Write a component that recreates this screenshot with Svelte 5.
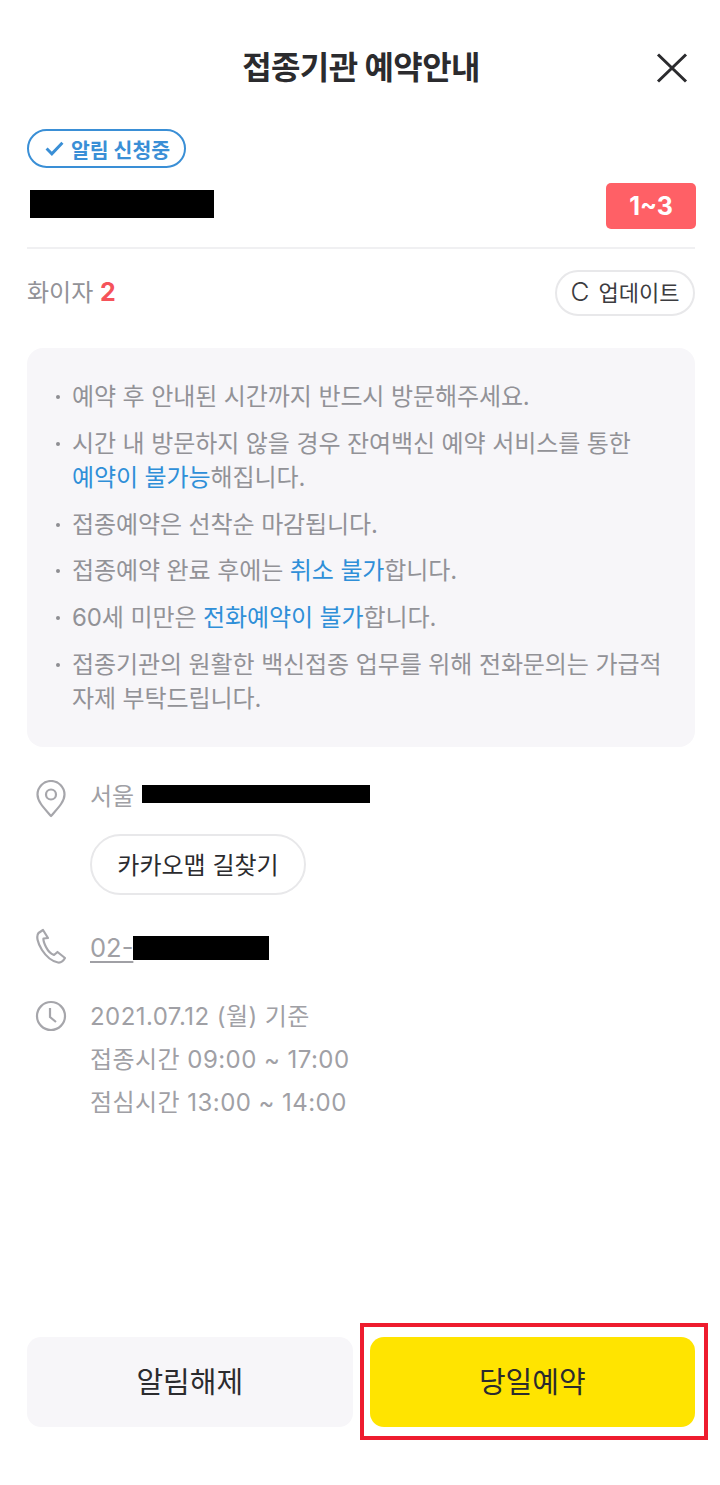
<script>
  const notes = [
    [{ t: '예약 후 안내된 시간까지 반드시 방문해주세요.' }],
    [{ t: '시간 내 방문하지 않을 경우 잔여백신 예약 서비스를 통한 ' }, { t: '예약이 불가능', b: true }, { t: '해집니다.' }],
    [{ t: '접종예약은 선착순 마감됩니다.' }],
    [{ t: '접종예약 완료 후에는 ' }, { t: '취소 불가', b: true }, { t: '합니다.' }],
    [{ t: '60세 미만은 ' }, { t: '전화예약이 불가', b: true }, { t: '합니다.' }],
    [{ t: '접종기관의 원활한 백신접종 업무를 위해 전화문의는 가급적 자제 부탁드립니다.' }]
  ];
</script>

<div class="page">
  <header class="head">
    <h1>접종기관 예약안내</h1>
    <svg class="close" viewBox="0 0 32 30" width="32" height="30" aria-label="닫기">
      <path d="M2 1.5 30 28.5M30 1.5 2 28.5" fill="none" stroke="#2b2b2e" stroke-width="3" />
    </svg>
  </header>

  <section class="top">
    <div class="badge">
      <svg viewBox="0 0 18 14" width="19" height="15"><path d="M1.500 7 6.500 12 16.500 1.500" fill="none" stroke="#3a8fd6" stroke-width="2.800" /></svg>
      <span>알림 신청중</span>
    </div>
    <div class="name">
      <div class="redact r1"></div>
      <div class="qty">1~3</div>
    </div>
  </section>

  <div class="status">
    <div class="count">화이자 <b>2</b></div>
    <div class="update"><span class="c">C</span><span>업데이트</span></div>
  </div>

  <ul class="notes">
    {#each notes as n}
      <li>
        {#each n as part}{#if part.b}<em>{part.t}</em>{:else}{part.t}{/if}{/each}
      </li>
    {/each}
  </ul>

  <div class="info first">
    <svg class="ico pin" viewBox="0 0 32 38" width="32" height="38">
      <path d="M16 36C10 29 2.500 22 2.500 14.500a13.500 13.500 0 0 1 27 0C29.500 22 22 29 16 36Z" fill="none" stroke="#a6a6ab" stroke-width="2.200" stroke-linejoin="round" />
      <circle cx="16" cy="14.500" r="5" fill="none" stroke="#a6a6ab" stroke-width="2.200" />
    </svg>
    <div class="col">
      <div class="addr"><span>서울</span><div class="redact r2"></div></div>
      <div class="route">카카오맵 길찾기</div>
    </div>
  </div>

  <div class="info phone">
    <svg class="ico" viewBox="0 0 32 36" width="32" height="36">
      <path d="M8 2 3.500 5C1 8 2.500 15 7 22s11 11.500 16 12.500c3 .5 5-1 7-4.500l-7.500-6-3.500 3c-3-1-6-4-8-8s-3-6-2.500-8.500L13 10 8 2Z" fill="none" stroke="#a6a6ab" stroke-width="2.200" stroke-linejoin="round" />
    </svg>
    <div class="tel"><span>02-</span><div class="redact r3"></div></div>
  </div>

  <div class="info hours">
    <svg class="ico" viewBox="0 0 32 32" width="32" height="32">
      <circle cx="16" cy="16" r="14" fill="none" stroke="#a6a6ab" stroke-width="2.200" />
      <path d="M15 8v9l6 5" fill="none" stroke="#a6a6ab" stroke-width="2.200" />
    </svg>
    <div class="col lines">
      <div>2021.07.12 (월) 기준</div>
      <div>접종시간 09:00 ~ 17:00</div>
      <div>점심시간 13:00 ~ 14:00</div>
    </div>
  </div>

  <footer class="foot">
    <div class="btn off">알림해제</div>
    <div class="btn on">당일예약</div>
  </footer>
</div>

<style>
  :global(body) {
    margin: 0;
    background: #fff;
  }
  .page {
    position: relative;
    display: flex;
    flex-direction: column;
    min-height: 1485px;
    box-sizing: border-box;
    padding: 0 25px 58px 27px;
    font-family: "Inter", "Noto Sans CJK KR", "Noto Sans", sans-serif;
    color: #2b2b2e;
  }
  .head {
    position: relative;
    display: flex;
    justify-content: center;
    align-items: center;
    height: 67px;
    padding-top: 34px;
    margin-bottom: 28px;
  }
  h1 {
    margin: 0;
    font-size: 32px;
    font-weight: 700;
    line-height: 67px;
    letter-spacing: -0.6px;
  }
  .close {
    position: absolute;
    right: 7px;
    top: 53px;
  }
  .top {
    border-bottom: 2px solid #f0f0f2;
    padding-bottom: 18px;
  }
  .badge {
    display: inline-flex;
    align-items: center;
    gap: 7px;
    box-sizing: border-box;
    height: 39px;
    padding: 0 14px 0 16px;
    border: 2px solid #3a8fd6;
    border-radius: 20px;
    color: #3a8fd6;
    font-size: 20.500px;
    font-weight: 700;
    vertical-align: top;
  }
  .name {
    display: flex;
    justify-content: space-between;
    align-items: center;
    margin-top: 15px;
    margin-right: -1px;
    height: 46px;
  }
  .redact {
    background: #000;
  }
  .r1 {
    width: 184px;
    height: 28px;
    margin-left: 3px;
    margin-top: -5px;
  }
  .qty {
    width: 90px;
    height: 46px;
    border-radius: 5px;
    background: #ff6066;
    color: #fff;
    font-size: 25px;
    font-weight: 700;
    text-align: center;
    line-height: 46px;
  }
  .status {
    display: flex;
    justify-content: space-between;
    align-items: center;
    margin-top: 21px;
  }
  .count {
    font-size: 24px;
    color: #929297;
    padding-bottom: 6px;
  }
  .count b {
    color: #f5535a;
    font-size: 25px;
  }
  .update {
    display: flex;
    align-items: center;
    justify-content: center;
    gap: 9px;
    box-sizing: border-box;
    width: 140px;
    height: 46px;
    padding: 0 0 4px 0;
    border: 2px solid #e8e8ea;
    border-radius: 23px;
    font-size: 22px;
    color: #3c3c40;
  }
  .c {
    font-size: 26px;
    font-weight: 300;
  }
  .notes {
    list-style: none;
    margin: 32px 0 0;
    padding: 32px 30px 31px 45px;
    background: #f7f6f9;
    border-radius: 16px;
    font-size: 24px;
    line-height: 34px;
    letter-spacing: -0.1px;
    color: #929297;
    word-break: keep-all;
  }
  .notes li {
    position: relative;
    margin-bottom: 12.800px;
  }
  .notes li:last-child {
    margin-bottom: 0;
  }
  .notes li::before {
    content: "";
    position: absolute;
    left: -16px;
    top: 15px;
    width: 4px;
    height: 4px;
    background: #8e8e93;
    border-radius: 50%;
  }
  .notes em {
    font-style: normal;
    color: #2f8fd8;
  }
  .info {
    display: flex;
    gap: 23px;
    margin-left: 8px;
    font-size: 24px;
    color: #a0a0a5;
  }
  .ico {
    flex: none;
    width: 32px;
  }
  .pin {
    margin-top: 1px;
  }
  .first {
    margin-top: 32px;
  }
  .addr {
    display: flex;
    align-items: center;
    gap: 8px;
    height: 31px;
  }
  .r2 {
    width: 228px;
    height: 18px;
  }
  .route {
    display: flex;
    align-items: center;
    justify-content: center;
    box-sizing: border-box;
    width: 216px;
    height: 61px;
    margin-top: 24px;
    padding-bottom: 2px;
    border: 2px solid #e8e8ea;
    border-radius: 31px;
    font-size: 24px;
    color: #2b2b2e;
  }
  .phone {
    margin-top: 33px;
  }
  .tel {
    display: flex;
    align-items: center;
    height: 36px;
    margin-top: 2px;
  }
  .tel span {
    font-size: 25.500px;
    text-decoration: underline;
    text-underline-offset: 4px;
  }
  .r3 {
    width: 136px;
    height: 24px;
  }
  .hours {
    margin-top: 34px;
  }
  .lines {
    line-height: 43px;
    margin-top: -5px;
    letter-spacing: 0.45px;
  }
  .foot {
    margin-top: auto;
    display: flex;
    gap: 17px;
    position: relative;
  }
  .btn {
    flex: 1;
    height: 90px;
    box-sizing: border-box;
    padding-bottom: 4px;
    border-radius: 14px;
    display: flex;
    align-items: center;
    justify-content: center;
    font-size: 29px;
    color: #2b2b2e;
  }
  .off {
    background: #f7f6f9;
  }
  .on {
    position: relative;
    background: #ffe400;
  }
  .on::after {
    content: "";
    position: absolute;
    left: -10px;
    right: -13px;
    top: -14px;
    bottom: -13px;
    border: 4px solid #ee1c2e;
  }
</style>
